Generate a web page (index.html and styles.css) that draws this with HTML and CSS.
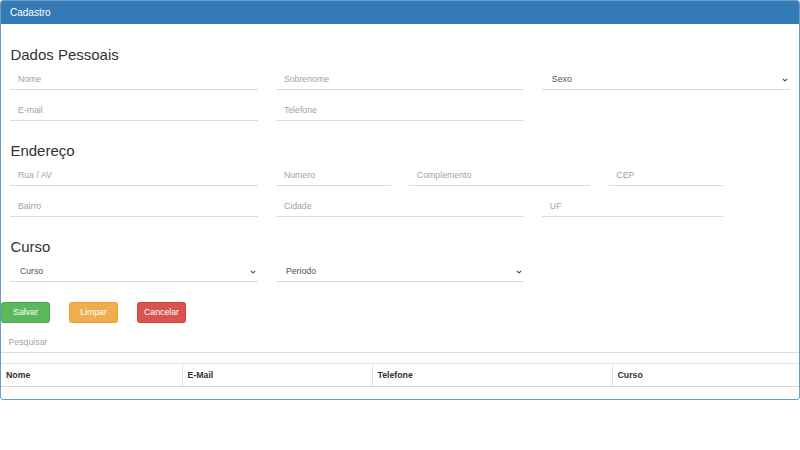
FILE: index.html
```html
<!DOCTYPE html>
<html lang="pt-BR">
<head>
<meta charset="utf-8">
<title>Cadastro</title>
<link rel="stylesheet" href="styles.css">
</head>
<body>
<div class="panel">
  <div class="panel-heading">Cadastro</div>
  <form class="panel-body">
    <h3>Dados Pessoais</h3>
    <div class="row">
      <div class="c4"><input class="field" type="text" placeholder="Nome"></div>
      <div class="c4"><input class="field" type="text" placeholder="Sobrenome"></div>
      <div class="c4 select-wrap">
        <select class="field select"><option>Sexo</option></select>
        <svg class="chev" width="6" height="4" viewBox="0 0 6 4"><path d="M0.8 0.8 L3 3 L5.2 0.8" fill="none" stroke="#555" stroke-width="1.1"/></svg>
      </div>
    </div>
    <div class="row">
      <div class="c4"><input class="field" type="text" placeholder="E-mail"></div>
      <div class="c4"><input class="field" type="text" placeholder="Telefone"></div>
    </div>

    <h3>Endereço</h3>
    <div class="row">
      <div class="c4"><input class="field" type="text" placeholder="Rua / AV"></div>
      <div class="c2"><input class="field" type="text" placeholder="Numero"></div>
      <div class="c3"><input class="field" type="text" placeholder="Complemento"></div>
      <div class="c2"><input class="field" type="text" placeholder="CEP"></div>
    </div>
    <div class="row">
      <div class="c4"><input class="field" type="text" placeholder="Bairro"></div>
      <div class="c4"><input class="field" type="text" placeholder="Cidade"></div>
      <div class="c3"><input class="field" type="text" placeholder="UF"></div>
    </div>

    <h3>Curso</h3>
    <div class="row">
      <div class="c4 select-wrap">
        <select class="field select"><option>Curso</option></select>
        <svg class="chev" width="6" height="4" viewBox="0 0 6 4"><path d="M0.8 0.8 L3 3 L5.2 0.8" fill="none" stroke="#555" stroke-width="1.1"/></svg>
      </div>
      <div class="c4 select-wrap">
        <select class="field select"><option>Periodo</option></select>
        <svg class="chev" width="6" height="4" viewBox="0 0 6 4"><path d="M0.8 0.8 L3 3 L5.2 0.8" fill="none" stroke="#555" stroke-width="1.1"/></svg>
      </div>
    </div>
  </form>

  <div class="actions">
    <button class="btn btn-success" type="button">Salvar</button>
    <button class="btn btn-warning" type="button">Limpar</button>
    <button class="btn btn-danger" type="button">Cancelar</button>
  </div>

  <input class="field search" type="text" placeholder="Pesquisar">

  <table class="grid">
    <colgroup>
      <col class="w-nome">
      <col class="w-email">
      <col class="w-tel">
      <col class="w-curso">
    </colgroup>
    <thead>
      <tr><th>Nome</th><th>E-Mail</th><th>Telefone</th><th>Curso</th></tr>
    </thead>
    <tbody></tbody>
  </table>
</div>
</body>
</html>
```

FILE: styles.css
```css
html, body {
  margin: 0;
  padding: 0;
  background: #fff;
}

body {
  font-family: "Liberation Sans", Arial, Helvetica, sans-serif;
  font-size: 8.75px;
  color: #333;
}

.panel {
  border: 1px solid #6b9bc9;
  border-radius: 3px;
  background: #fff;
  height: 400px;
  box-sizing: border-box;
  overflow: hidden;
}

.panel-heading {
  background: #337ab7;
  color: #fff;
  font-size: 10px;
  line-height: 11px;
  padding: 6px 9px 6px 9px;
  height: 23px;
  box-sizing: border-box;
}

.panel-body {
  display: flex;
  flex-direction: column;
  padding: 11px 9.4px 0 9.4px;
  margin: 0;
}

.panel-body h3 {
  font-size: 15px;
  font-weight: 400;
  line-height: 16.5px;
  margin: 12px 0 5.5px 0;
  color: #333;
}

.row {
  display: grid;
  grid-template-columns: repeat(12, 1fr);
  column-gap: 18.75px;
  margin-bottom: 10px;
}

.c2 { grid-column: span 2; }
.c3 { grid-column: span 3; }
.c4 { grid-column: span 4; }

.field {
  display: block;
  width: 100%;
  box-sizing: border-box;
  height: 21px;
  margin: 0;
  padding: 0 7.5px;
  border: 0;
  border-bottom: 1px solid #dcdcdc;
  border-radius: 0;
  background: transparent;
  font-family: inherit;
  font-size: 8.75px;
  color: #555;
  outline: none;
}

.field::placeholder {
  color: #a3a3a3;
  opacity: 1;
}

.select-wrap {
  position: relative;
}

.select {
  -webkit-appearance: none;
  appearance: none;
  padding-left: 9.5px;
  padding-right: 14px;
  color: #555;
}

.chev {
  position: absolute;
  right: 2px;
  top: 9px;
  pointer-events: none;
}

.actions {
  display: flex;
  gap: 19px;
  margin-top: 9.5px;
  padding-left: 0;
}

.btn {
  width: 49px;
  height: 21px;
  box-sizing: border-box;
  border: 1px solid transparent;
  border-radius: 2.5px;
  color: #fff;
  font-family: inherit;
  font-size: 8.75px;
  line-height: 1;
  padding: 0;
  margin: 0;
  cursor: pointer;
}

.btn-success { background: #5cb85c; border-color: #4cae4c; }
.btn-warning { background: #f0ad4e; border-color: #eea236; }
.btn-danger  { background: #d9534f; border-color: #d43f3a; }

.search {
  margin-top: 9.5px;
}

.grid {
  width: 100%;
  table-layout: fixed;
  border-collapse: collapse;
  margin-top: 9.5px;
}

.w-nome  { width: 181px; }
.w-email { width: 190px; }
.w-tel   { width: 240px; }
.w-curso { width: auto; }

.grid th {
  text-align: left;
  font-weight: 700;
  font-size: 8.75px;
  line-height: 12.5px;
  color: #333;
  padding: 5px 5px;
  border: 1px solid #e3e3e3;
  border-bottom: 1px solid #d6d6d6;
}

.grid th:first-child { border-left: 0; }
.grid th:last-child { border-right: 0; }
```
